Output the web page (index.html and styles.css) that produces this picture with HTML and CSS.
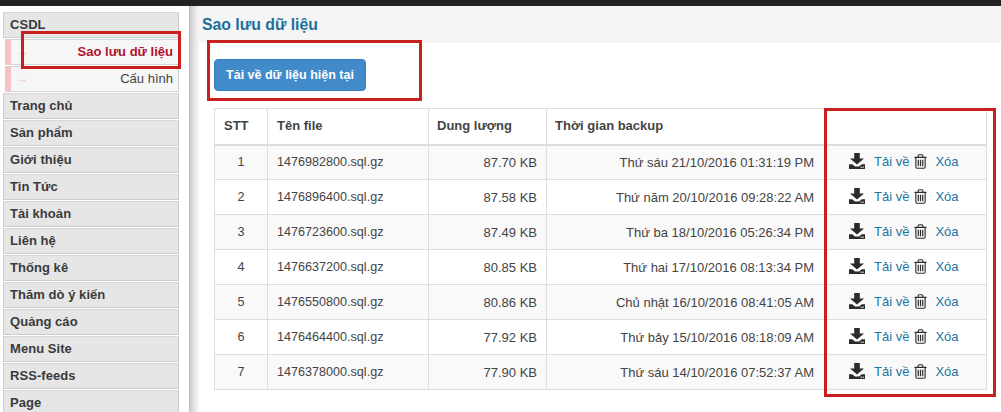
FILE: index.html
```html
<!DOCTYPE html>
<html lang="vi">
<head>
<meta charset="utf-8">
<title>Sao lưu dữ liệu</title>
<link rel="stylesheet" href="styles.css">
</head>
<body>
<svg class="defs" width="0" height="0" aria-hidden="true">
  <symbol id="dl" viewBox="0 0 16 16">
    <path d="M5.2 0h5.6v5.4H15L8 11.6 1 5.4h4.2z" fill="#2b2b2b"/>
    <path d="M0 11.2h3.2L6 13.6h4l2.8-2.4H16V16H0z" fill="#2b2b2b"/>
    <rect x="11.6" y="13.6" width="1.2" height="1.2" fill="#fff"/>
    <rect x="13.6" y="13.6" width="1.2" height="1.2" fill="#fff"/>
  </symbol>
  <symbol id="tr" viewBox="0 0 14 16">
    <path d="M.5 3.5h13M2 3.5V14a1.3 1.3 0 0 0 1.3 1.3h7.4A1.3 1.3 0 0 0 12 14V3.5M4.5 3.5V1.8A1 1 0 0 1 5.5.8h3a1 1 0 0 1 1 1v1.7" fill="none" stroke="#2b2b2b" stroke-width="1.2"/>
    <path d="M4.6 6v7M7 6v7M9.4 6v7" fill="none" stroke="#2b2b2b" stroke-width="1.3"/>
  </symbol>
</svg>
<div class="topbar"></div>
<div class="layout">
  <nav class="sidebar">
    <a class="item">CSDL</a>
    <a class="sub active"><span class="arrow">→</span>Sao lưu dữ liệu</a>
    <a class="sub"><span class="arrow">→</span>Cấu hình</a>
    <a class="item">Trang chủ</a>
    <a class="item">Sản phẩm</a>
    <a class="item">Giới thiệu</a>
    <a class="item">Tin Tức</a>
    <a class="item">Tài khoản</a>
    <a class="item">Liên hệ</a>
    <a class="item">Thống kê</a>
    <a class="item">Thăm dò ý kiến</a>
    <a class="item">Quảng cáo</a>
    <a class="item">Menu Site</a>
    <a class="item">RSS-feeds</a>
    <a class="item">Page</a>
  </nav>
  <main class="main">
    <h1 class="title">Sao lưu dữ liệu</h1>
    <section class="panel">
      <button class="btn">Tải về dữ liệu hiện tại</button>
      <table class="grid">
        <colgroup>
          <col class="c1"><col class="c2"><col class="c3"><col class="c4"><col class="c5">
        </colgroup>
        <thead>
          <tr><th>STT</th><th>Tên file</th><th>Dung lượng</th><th>Thời gian backup</th><th></th></tr>
        </thead>
        <tbody>
          <tr><td class="ctr">1</td><td>1476982800.sql.gz</td><td class="rgt">87.70 KB</td><td class="rgt">Thứ sáu 21/10/2016 01:31:19 PM</td><td class="acts"><svg class="i-dl"><use href="#dl"/></svg><a class="lnk l1">Tải về</a><svg class="i-tr"><use href="#tr"/></svg><a class="lnk l2">Xóa</a></td></tr>
          <tr><td class="ctr">2</td><td>1476896400.sql.gz</td><td class="rgt">87.58 KB</td><td class="rgt">Thứ năm 20/10/2016 09:28:22 AM</td><td class="acts"><svg class="i-dl"><use href="#dl"/></svg><a class="lnk l1">Tải về</a><svg class="i-tr"><use href="#tr"/></svg><a class="lnk l2">Xóa</a></td></tr>
          <tr><td class="ctr">3</td><td>1476723600.sql.gz</td><td class="rgt">87.49 KB</td><td class="rgt">Thứ ba 18/10/2016 05:26:34 PM</td><td class="acts"><svg class="i-dl"><use href="#dl"/></svg><a class="lnk l1">Tải về</a><svg class="i-tr"><use href="#tr"/></svg><a class="lnk l2">Xóa</a></td></tr>
          <tr><td class="ctr">4</td><td>1476637200.sql.gz</td><td class="rgt">80.85 KB</td><td class="rgt">Thứ hai 17/10/2016 08:13:34 PM</td><td class="acts"><svg class="i-dl"><use href="#dl"/></svg><a class="lnk l1">Tải về</a><svg class="i-tr"><use href="#tr"/></svg><a class="lnk l2">Xóa</a></td></tr>
          <tr><td class="ctr">5</td><td>1476550800.sql.gz</td><td class="rgt">80.86 KB</td><td class="rgt">Chủ nhật 16/10/2016 08:41:05 AM</td><td class="acts"><svg class="i-dl"><use href="#dl"/></svg><a class="lnk l1">Tải về</a><svg class="i-tr"><use href="#tr"/></svg><a class="lnk l2">Xóa</a></td></tr>
          <tr><td class="ctr">6</td><td>1476464400.sql.gz</td><td class="rgt">77.92 KB</td><td class="rgt">Thứ bảy 15/10/2016 08:18:09 AM</td><td class="acts"><svg class="i-dl"><use href="#dl"/></svg><a class="lnk l1">Tải về</a><svg class="i-tr"><use href="#tr"/></svg><a class="lnk l2">Xóa</a></td></tr>
          <tr><td class="ctr">7</td><td>1476378000.sql.gz</td><td class="rgt">77.90 KB</td><td class="rgt">Thứ sáu 14/10/2016 07:52:37 AM</td><td class="acts"><svg class="i-dl"><use href="#dl"/></svg><a class="lnk l1">Tải về</a><svg class="i-tr"><use href="#tr"/></svg><a class="lnk l2">Xóa</a></td></tr>
        </tbody>
      </table>
    </section>
  </main>
</div>
<div class="mark m1"></div>
<div class="mark m2"></div>
<div class="mark m3"></div>
</body>
</html>
```
FILE: styles.css
```css
* { box-sizing: border-box; }
html, body { margin: 0; height: 412px; overflow: hidden; background: #fff; }
body { font-family: "Liberation Sans", Arial, sans-serif; color: #333; position: relative; }
.defs { position: absolute; }
.topbar { height: 6px; background: #222; }
.layout { display: flex; height: 406px; overflow: hidden; }

.sidebar {
  width: 199px; flex: none; padding: 6px 20px 0 3px;
  display: flex; flex-direction: column; gap: 1px;
  background: linear-gradient(to right, #fff 189px, #bdbdbd 189px, #d8d8d8 192px, #f0f0f0 197px, #f5f5f5 199px);
}
.item {
  flex: none; height: 26px; line-height: 24px; padding-left: 6px;
  background: #e6e6e6; border: 1px solid #ccc; border-top-color: #d6d6d6;
  font-size: 13px; font-weight: bold; color: #3a3a3a; letter-spacing: .05px;
}
.sub {
  flex: none; height: 26px; line-height: 24px; padding-right: 5px; margin-left: 2px; text-align: right;
  background: #f6f6f6; border: 1px solid #d4d4d4; border-left: 6px solid #f2c4c8;
  font-size: 13px; color: #444; position: relative;
}
.sub.active { color: #b1122f; font-weight: bold; }
.arrow { position: absolute; left: 4px; top: 0; color: #f2c4c8; font-size: 13px; font-weight: normal; }

.main { flex: 1; min-width: 0; background: #f5f5f5; }
.title { margin: 0; height: 37px; padding: 9px 0 0 3px; font-size: 15.8px; line-height: 20px; font-weight: bold; color: #1c6f9c; }
.panel { background: #fff; height: 369px; padding: 16px 15px 0 15px; }
.btn {
  display: block; width: 152px; height: 32px; padding: 0; border: 1px solid #3a7fbd; border-radius: 4px;
  background: #428bca; color: #fff; font: bold 12.5px "Liberation Sans", Arial, sans-serif;
}

.grid { margin-top: 17px; width: 772px; border-collapse: collapse; table-layout: fixed; font-size: 12.6px; color: #444; }
.c1 { width: 53px; } .c2 { width: 161px; } .c3 { width: 118px; } .c4 { width: 279px; } .c5 { width: 161px; }
.grid th, .grid td { border: 1px solid #ddd; padding: 0 9px; }
.grid th { height: 36px; padding-bottom: 2px; text-align: left; font-size: 13px; font-weight: bold; color: #444; border-bottom-width: 2px; }
.grid th:nth-child(n+3) { padding-left: 8px; }
.grid td { height: 35px; }
.grid tbody tr:nth-child(odd) { background: #f9f9f9; }
.ctr { text-align: center; }
.grid td.rgt { text-align: right; font-size: 13px; }
.grid td.rgt:nth-child(4) { padding-right: 11px; }
.grid td.acts { white-space: nowrap; padding: 0 0 2px 23px; font-size: 13px; }
.acts svg { vertical-align: -3px; }
.i-dl { width: 16px; height: 16px; }
.i-tr { width: 13px; height: 15px; margin-left: 5px; }
.lnk { color: #22759f; }
.l1 { margin-left: 9px; }
.l2 { margin-left: 8px; }

.mark { position: absolute; border: 3px solid #c9201f; }
.m1 { left: 21px; top: 31px; width: 160px; height: 38px; }
.m2 { left: 207px; top: 40px; width: 215px; height: 61px; }
.m3 { left: 824px; top: 108px; width: 172px; height: 289px; }
```
